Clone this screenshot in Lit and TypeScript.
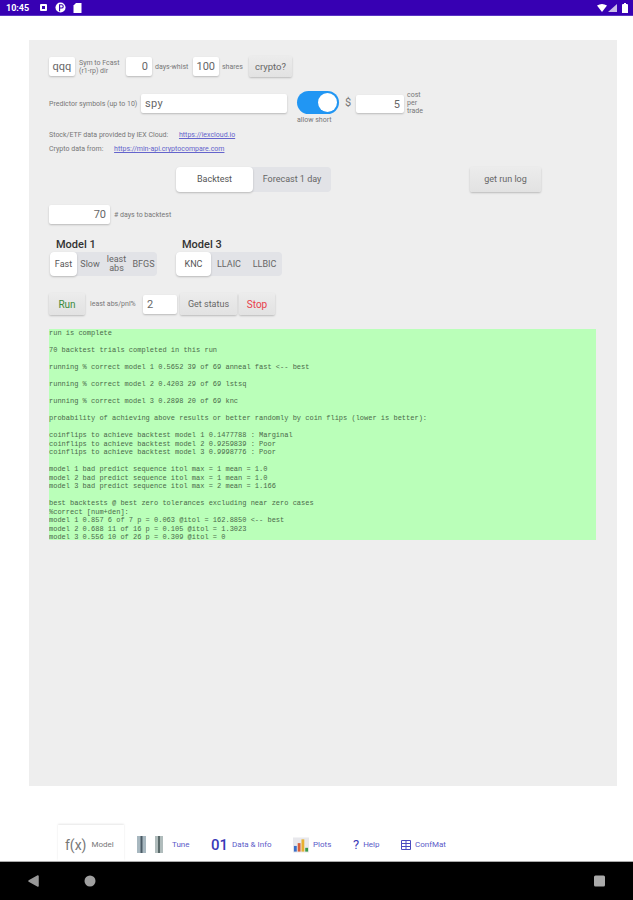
import { LitElement, html, css } from "lit";
import { customElement } from "lit/decorators.js";

const OUTPUT = `run is complete

70 backtest trials completed in this run

running % correct model 1 0.5652 39 of 69 anneal fast <-- best

running % correct model 2 0.4203 29 of 69 lstsq

running % correct model 3 0.2898 20 of 69 knc

probability of achieving above results or better randomly by coin flips (lower is better):

coinflips to achieve backtest model 1 0.1477788 : Marginal
coinflips to achieve backtest model 2 0.9259839 : Poor
coinflips to achieve backtest model 3 0.9998776 : Poor

model 1 bad predict sequence itol max = 1 mean = 1.0
model 2 bad predict sequence itol max = 1 mean = 1.0
model 3 bad predict sequence itol max = 2 mean = 1.166

best backtests @ best zero tolerances excluding near zero cases
%correct [num+den]:
model 1 0.857 6 of 7 p = 0.063 @itol = 162.8850 <-- best
model 2 0.688 11 of 16 p = 0.105 @itol = 1.3023
model 3 0.556 10 of 26 p = 0.309 @itol = 0`;

@customElement("app-root")
export class AppRoot extends LitElement {
  static styles = css`
    :host { display: block; width: 633px; height: 900px; background: #fff; font-family: Roboto, "Liberation Sans", sans-serif; color: #555; overflow: hidden; }
    .page { display: flex; flex-direction: column; height: 900px; }
    .status { height: 16px; background: #3700b3; border-bottom: 1px solid #5a35c4; box-sizing: border-box; display: flex; align-items: center; padding: 0 5px 0 6px; color: #fff; font-size: 9px; font-weight: 700; }
    .status .time { margin-right: 3px; }
    .status svg { display: block; }
    .left { display: flex; align-items: center; gap: 8px; }
    .doc { margin-left: -1px; }
    .right { margin-left: auto; display: flex; align-items: center; gap: 1px; }
    .batt { margin-left: 4px; }
    .main { flex: 1; padding: 24px 16px 0 29px; }
    .panel { height: 746px; background: #eeeeee; padding: 16px 21px 0 20px; box-sizing: border-box; }
    .row { display: flex; align-items: center; }
    .r1 { height: 21px; margin-bottom: 14px; }
    .input { background: #fff; border-radius: 2px; box-shadow: 0 1px 2px rgba(0,0,0,.22); box-sizing: border-box; height: 19px; display: flex; align-items: center; justify-content: flex-end; padding: 0 4px; font-size: 11px; color: #666; }
    .tiny { font-size: 7px; line-height: 8px; color: #777; white-space: nowrap; }
    .btn { background: linear-gradient(#ececec, #e2e2e2); box-shadow: 0 1px 2px rgba(0,0,0,.22); border-radius: 2px; display: flex; align-items: center; justify-content: center; box-sizing: border-box; font-size: 9.5px; color: #666; }
    .r2 { height: 27px; margin-bottom: 13px; align-items: flex-start; }
    .toggle { width: 42px; height: 23px; background: #2196f3; border-radius: 12px; position: relative; box-sizing: border-box; }
    .knob { position: absolute; right: 2px; top: 2px; width: 19px; height: 19px; border-radius: 50%; background: #fff; }
    .short { margin-top: 2px; }
    .dollar { margin: 5px 0 0 6px; font-size: 11px; width: 11px; color: #777; }
    .links { font-size: 7px; color: #777; display: flex; flex-direction: column; gap: 6px; line-height: 8px; }
    .links a { color: #6464cc; text-decoration: underline; margin-left: 9px; }
    .r3 { height: 26px; margin-top: 13px; }
    .seg { display: flex; background: #e2e3e7; border-radius: 4px; }
    .seg .opt { display: flex; align-items: center; justify-content: center; font-size: 9px; color: #666; box-sizing: border-box; text-align: center; line-height: 9px; }
    .seg .on { background: #fff; border-radius: 4px; box-shadow: 0 1px 2px rgba(0,0,0,.22); color: #555; }
    .mode { margin-left: 127px; }
    .log { margin-left: 139px; width: 71px; height: 25px; font-size: 9px; }
    .r4 { margin-top: 13px; height: 19px; gap: 4px; }
    .models { margin: 15px 0 0 1px; display: flex; gap: 19px; }
    .model h3 { margin: 0 0 1px 6px; font-size: 11px; line-height: 12px; font-weight: 500; color: #333; }
    .r6 { margin-top: 17px; height: 22px; }
    .out { margin: 14px 0 0 0; width: 547px; background: #baffb9; font-family: "Liberation Mono", monospace; font-size: 7px; line-height: 8.5px; color: #4a6a4a; white-space: pre; height: 211px; overflow: hidden; }
    .tabs { height: 36px; display: flex; align-items: stretch; padding-left: 58px; }
    .tab { display: flex; align-items: center; font-size: 8px; color: #5a5ac8; padding-top: 3px; box-sizing: border-box; }
    .tab.sel { width: 66px; background: #fff; box-shadow: 0 -1px 2px rgba(0,0,0,.1); padding-left: 7px; gap: 5px; color: #777; }
    .fx { font-size: 14px; color: #777; }
    .zero { font-size: 15px; color: #3a3ab8; font-weight: 500; margin-right: 4px; }
    .q { font-size: 13px; color: #3a3ab8; margin-right: 4px; }
    .nav { height: 39px; background: #000; position: relative; border-top: 1px solid #aaa; box-sizing: border-box; }
    .nav svg { position: absolute; left: 0; top: 0; }
  `;

  private seg(items: [string, number][], on: number, h: number) {
    return html`<div class="seg">${items.map(([t, w], i) => html`<div class="opt ${i === on ? "on" : ""}" style="width:${w}px;height:${h}px">${t}</div>`)}</div>`;
  }

  render() {
    return html`<div class="page">
      <div class="status">
        <div class="left">
          <span class="time">10:45</span>
          <svg width="7" height="7"><rect width="7" height="7" rx="1" fill="#fff"/><rect x="2" y="2" width="3" height="3" fill="#3700b3"/></svg>
          <svg width="11" height="11" viewBox="0 0 12 12"><circle cx="6" cy="6" r="5.5" fill="#fff"/><path d="M5 2.5V10M5 3h2.2a1.7 1.7 0 010 3.6H5" fill="none" stroke="#3700b3" stroke-width="1.2"/></svg>
          <svg class="doc" width="9" height="10" viewBox="0 0 8 10"><path d="M2.5 0H8V10H0V2.5Z" fill="#fff"/></svg>
        </div>
        <div class="right">
          <svg width="10" height="8" viewBox="0 0 10 8"><path d="M0 1.5Q5-1.5 10 1.5L5 8Z" fill="#fff"/></svg>
          <svg width="9" height="8" viewBox="0 0 9 8"><path d="M9 0V8H0Z" fill="#c9bce8"/></svg>
          <svg class="batt" width="6" height="10" viewBox="0 0 6 10"><path d="M1 1H2V0H4V1H5a1 1 0 011 1V10H0V2a1 1 0 011-1Z" fill="#fff"/></svg>
        </div>
      </div>

      <div class="main"><div class="panel">
        <div class="row r1">
          <div class="input" style="width:26px;justify-content:center;padding:0">qqq</div>
          <div class="tiny" style="margin-left:4px;width:47px">Sym to Fcast<br>(r1-rp) dir</div>
          <div class="input" style="width:26px">0</div>
          <div class="tiny" style="margin-left:3px;width:38px">days-whist</div>
          <div class="input" style="width:26px">100</div>
          <div class="tiny" style="margin-left:3px;width:27px">shares</div>
          <div class="btn" style="width:43px;height:21px">crypto?</div>
        </div>
        <div class="row r2">
          <div class="tiny" style="width:92px;margin-top:9px">Predictor symbols (up to 10)</div>
          <div class="input" style="width:146px;height:19px;margin-top:3px;justify-content:flex-start;font-size:11px;letter-spacing:.3px">spy</div>
          <div style="margin-left:10px;width:42px">
            <div class="toggle"><div class="knob"></div></div>
            <div class="tiny short">allow short</div>
          </div>
          <div class="dollar">$</div>
          <div class="input" style="width:48px;height:18px;margin:4px 0 0 0">5</div>
          <div class="tiny" style="margin-left:3px">cost<br>per<br>trade</div>
        </div>
        <div class="links">
          <div>Stock/ETF data provided by IEX Cloud: <a>https://iexcloud.io</a></div>
          <div>Crypto data from: <a>https://min-api.cryptocompare.com</a></div>
        </div>
        <div class="row r3">
          <div class="mode">${this.seg([["Backtest", 77], ["Forecast 1 day", 78]], 0, 25)}</div>
          <div class="btn log">get run log</div>
        </div>
        <div class="row r4">
          <div class="input" style="width:61px">70</div>
          <div class="tiny"># days to backtest</div>
        </div>
        <div class="models">
          <div class="model"><h3>Model 1</h3>${this.seg([["Fast", 27], ["Slow", 26], ["least abs", 27], ["BFGS", 27]], 0, 24)}</div>
          <div class="model"><h3>Model 3</h3>${this.seg([["KNC", 35], ["LLAIC", 36], ["LLBIC", 35]], 0, 24)}</div>
        </div>
        <div class="row r6">
          <div class="btn" style="width:36px;height:22px;color:#3a8a3a;font-size:10px">Run</div>
          <div class="tiny" style="margin-left:5px;width:53px">least abs/pnl%</div>
          <div class="input" style="width:34px;justify-content:flex-start;font-size:11px">2</div>
          <div class="btn" style="width:57px;height:22px;margin-left:3px;font-size:9px">Get status</div>
          <div class="btn" style="width:36px;height:22px;margin-left:2px;color:#e8404a;font-size:10px">Stop</div>
        </div>
        <div class="out">${OUTPUT}</div>
      </div></div>

      <div class="tabs">
        <div class="tab sel"><span class="fx">f(x)</span><span>Model</span></div>
        <div class="tab" style="margin-left:13px;width:74px">
          <svg width="26" height="17" viewBox="0 0 26 17" style="margin-right:9px">
            <rect x="0" y="0" width="9" height="17" fill="#a8b8c0"/><rect x="3.5" y="0" width="2" height="17" fill="#4a5a65"/>
            <rect x="18" y="0" width="8" height="17" fill="#b0bcbc"/><rect x="21" y="0" width="2" height="17" fill="#5a6a6a"/>
          </svg>Tune</div>
        <div class="tab" style="width:82px"><span class="zero">01</span>Data &amp; Info</div>
        <div class="tab" style="width:60px">
          <svg width="16" height="16" viewBox="0 0 17 16" style="margin-right:4px">
            <rect width="17" height="16" fill="#e8e8ec"/>
            <rect x="1" y="9" width="3" height="6" fill="#3a6fc8"/><rect x="5" y="6" width="3" height="9" fill="#d8603a"/><rect x="9" y="2" width="3" height="13" fill="#e8b030"/><rect x="13" y="11" width="3" height="4" fill="#3a9a4a"/>
          </svg>Plots</div>
        <div class="tab" style="width:48px"><span class="q">?</span>Help</div>
        <div class="tab">
          <svg width="10" height="10" viewBox="0 0 10 10" style="margin-right:4px"><path d="M.5.5h9v9h-9zM.5 3.5h9M.5 6.5h9M5 .5v9" fill="none" stroke="#4a4ac0" stroke-width="1"/></svg>ConfMat</div>
      </div>

      <div class="nav">
        <svg width="633" height="38" viewBox="0 0 633 38">
          <path d="M29 19 38 14V24Z" fill="#999" stroke="#999" stroke-width="1.5" stroke-linejoin="round"/>
          <circle cx="90" cy="19" r="5.5" fill="#a0a0a0"/>
          <rect x="594" y="13.5" width="11" height="11" rx="1.5" fill="#aaa"/>
        </svg>
      </div>
    </div>`;
  }
}
